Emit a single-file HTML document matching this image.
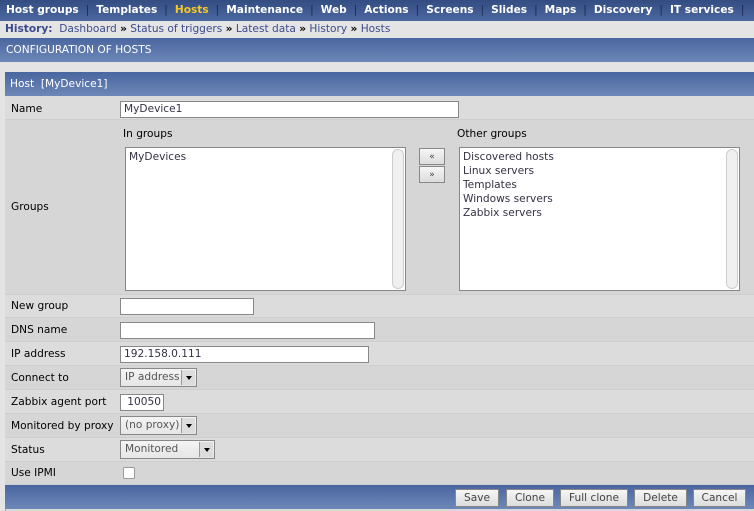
<!DOCTYPE html>
<html><head><style>
*{box-sizing:border-box;margin:0;padding:0}
body{width:754px;height:511px;background:#e4e4e4;font-family:"DejaVu Sans",Verdana,sans-serif;font-size:10.6px;color:#000;position:relative;overflow:hidden}
.a{position:absolute}
.nav{left:0;top:0;width:754px;height:21px;background:linear-gradient(#334d82,#4c68a0);color:#fff;font-weight:bold;font-size:10.6px;white-space:nowrap;line-height:21px;padding-left:6px;overflow:hidden}
.nav span.s{color:#1a2a4a;margin:0 7px;font-weight:normal}
.hist{left:0;top:21px;width:754px;height:17px;background:#e4e4e4;color:#3c4b8c;line-height:17px;padding-left:5px}
.hdr{left:0;width:754px;height:24px;background:linear-gradient(#4a66a0,#6d87b7);color:#fff;line-height:24px;padding-left:6px}
.row{left:5px;width:749px;border-bottom:1px solid #cfcfcf}
.lbl{position:absolute;left:6px}
.inp{position:absolute;background:#fff;border:1px solid #888;height:17px;padding-left:3px;line-height:15px;color:#334}
.sel{position:absolute;background:linear-gradient(#f4f4f4,#e6e6e6);border:1px solid #888;height:19px;padding-left:4px;line-height:17px;color:#555}
.sel:after{content:"";position:absolute;right:1px;top:1px;width:13px;height:15px;background:#ddd;border-left:1px solid #999}
.sel i{position:absolute;right:4px;top:7px;width:0;height:0;border-left:3px solid transparent;border-right:3px solid transparent;border-top:4px solid #000;z-index:2}
.lb{position:absolute;background:#fff;border:1px solid #888;padding:2px 3px;line-height:14px;color:#334}
.sb{position:absolute;right:1px;top:1px;bottom:1px;width:12px;background:#f0f0f0;border:1px solid #ccc;border-radius:6px}
.btn{position:absolute;background:linear-gradient(#f6f6f6,#dcdcdc);border:1px solid #888;height:18px;text-align:center;line-height:16px;color:#444}
</style></head><body>
<div class="a nav">Host groups<span class="s">|</span>Templates<span class="s">|</span><span style="color:#f6c824">Hosts</span><span class="s">|</span>Maintenance<span class="s">|</span>Web<span class="s">|</span>Actions<span class="s">|</span>Screens<span class="s">|</span>Slides<span class="s">|</span>Maps<span class="s">|</span>Discovery<span class="s">|</span>IT services<span class="s">|</span></div>
<div class="a hist"><b>History:</b>&nbsp; Dashboard <b style="color:#000">»</b> Status of triggers <b style="color:#000">»</b> Latest data <b style="color:#000">»</b> History <b style="color:#000">»</b> Hosts</div>
<div class="a hdr" style="top:38px">CONFIGURATION OF HOSTS</div>
<div class="a" style="left:5px;top:72px;width:749px;height:439px;background:#d8d8d8;border-left:1px solid #aaa"></div>
<div class="a hdr" style="top:72px;left:5px;width:749px;padding-left:5px">Host &nbsp;[MyDevice1]</div>

<div class="a row" style="top:96px;height:24px;background:#dcdcdc;line-height:26px"><span class="lbl">Name</span><div class="inp" style="left:115px;top:5px;width:339px">MyDevice1</div></div>
<div class="a row" style="top:120px;height:175px;background:#d6d6d6">
<span class="lbl" style="top:81px">Groups</span>
<span style="position:absolute;left:118px;top:8px">In groups</span>
<span style="position:absolute;left:452px;top:8px">Other groups</span>
<div class="lb" style="left:120px;top:27px;width:281px;height:144px">MyDevices<div class="sb"></div></div>
<div class="btn" style="left:414px;top:28px;width:26px;height:17px;font-size:9px">«</div>
<div class="btn" style="left:414px;top:46px;width:26px;height:17px;font-size:9px">»</div>
<div class="lb" style="left:454px;top:27px;width:281px;height:144px">Discovered hosts<br>Linux servers<br>Templates<br>Windows servers<br>Zabbix servers<div class="sb"></div></div>
</div>
<div class="a row" style="top:295px;height:23px;background:#dcdcdc;line-height:22px"><span class="lbl">New group</span><div class="inp" style="left:115px;top:3px;width:134px"></div></div>
<div class="a row" style="top:318px;height:24px;background:#d6d6d6;line-height:24px"><span class="lbl">DNS name</span><div class="inp" style="left:115px;top:4px;width:255px"></div></div>
<div class="a row" style="top:342px;height:24px;background:#dcdcdc;line-height:24px"><span class="lbl">IP address</span><div class="inp" style="left:115px;top:4px;width:249px">192.158.0.111</div></div>
<div class="a row" style="top:366px;height:24px;background:#d6d6d6;line-height:24px"><span class="lbl">Connect to</span><div class="sel" style="left:115px;top:2px;width:77px">IP address<i></i></div></div>
<div class="a row" style="top:390px;height:24px;background:#dcdcdc;line-height:24px"><span class="lbl">Zabbix agent port</span><div class="inp" style="left:115px;top:4px;width:44px;text-align:right;padding-right:2px">10050</div></div>
<div class="a row" style="top:414px;height:24px;background:#d6d6d6;line-height:24px"><span class="lbl">Monitored by proxy</span><div class="sel" style="left:115px;top:2px;width:77px">(no proxy)<i></i></div></div>
<div class="a row" style="top:438px;height:24px;background:#dcdcdc;line-height:24px"><span class="lbl">Status</span><div class="sel" style="left:115px;top:2px;width:95px">Monitored<i></i></div></div>
<div class="a row" style="top:462px;height:23px;background:#d6d6d6;line-height:23px"><span class="lbl">Use IPMI</span><div style="position:absolute;left:118px;top:5px;width:12px;height:12px;background:#fff;border:1px solid #999;border-radius:2px"></div></div>
<div class="a hdr" style="top:485px;left:5px;width:749px;height:24px"></div>
<div class="btn" style="left:455px;top:489px;width:44px">Save</div>
<div class="btn" style="left:506px;top:489px;width:48px">Clone</div>
<div class="btn" style="left:560px;top:489px;width:68px">Full clone</div>
<div class="btn" style="left:634px;top:489px;width:53px">Delete</div>
<div class="btn" style="left:693px;top:489px;width:53px">Cancel</div>
</body></html>
